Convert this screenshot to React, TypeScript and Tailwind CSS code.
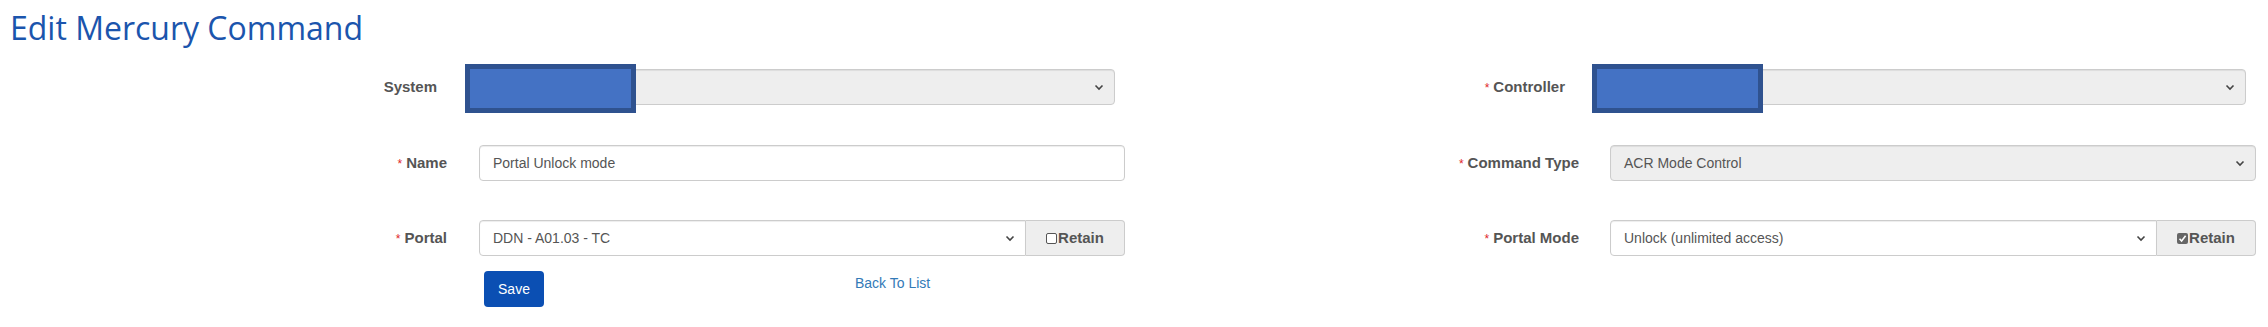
import React from 'react'

const labelCls = "shrink-0 text-right text-[15px] font-bold text-[#555]"

function Req() {
  return <span className="mr-[4px] text-[12px] font-normal text-[#e0262a]">*</span>
}

function Chevron() {
  return (
    <svg width="10" height="7" viewBox="0 0 10 7" className="shrink-0">
      <path d="M1.5 1.5 L5 5 L8.5 1.5" fill="none" stroke="#444" strokeWidth="1.6" />
    </svg>
  )
}

function Redacted() {
  // redaction overlay sitting on top of the select
  return (
    <div className="absolute -left-[4px] -top-[5px] h-[49px] w-[171px] border-[5px] border-[#2f528f] bg-[#4472c4]" />
  )
}

function SelectBox({ value, disabled, className = "" }: { value?: string; disabled?: boolean; className?: string }) {
  return (
    <div
      className={`flex h-[36px] items-center justify-between border border-[#ccc] pl-[13px] pr-[10px] text-[14px] text-[#555] shadow-[inset_0_1px_1px_rgba(0,0,0,0.075)] ${disabled ? "bg-[#eee]" : "bg-white"} ${className}`}
    >
      <span>{value}</span>
      <Chevron />
    </div>
  )
}

function Retain({ checked }: { checked?: boolean }) {
  return (
    <div className="flex h-[36px] w-[99px] shrink-0 items-center justify-center rounded-r-[4px] border border-l-0 border-[#ccc] bg-[#eee] text-[15px] font-bold text-[#555]">
      {checked ? (
        <span className="mr-[1px] flex h-[11px] w-[11px] items-center justify-center rounded-[2px] bg-[#666]">
          <svg width="9" height="9" viewBox="0 0 9 9">
            <path d="M1.5 4.8 L3.6 7 L7.6 1.8" fill="none" stroke="#fff" strokeWidth="1.6" />
          </svg>
        </span>
      ) : (
        <span className="mr-[1px] h-[11px] w-[11px] rounded-[2px] border border-[#555] bg-white" />
      )}
      Retain
    </div>
  )
}

export default function App() {
  return (
    <div className="min-h-[327px] w-full bg-white font-['Liberation_Sans',Arial,sans-serif]">
      <h2 className="pl-[10px] pt-[12px] font-['Open_Sans',sans-serif] text-[32px] leading-none text-[#1b55ad]">
        Edit Mercury Command
      </h2>

      {/* row 1 */}
      <div className="mt-[25px] grid grid-cols-2">
        <div className="flex items-center">
          <div className={`${labelCls} w-[437px]`}>System</div>
          <div className="relative ml-[32px] w-[646px]">
            <SelectBox disabled className="rounded-[4px]" />
            <Redacted />
          </div>
        </div>
        <div className="flex items-center">
          <div className={`${labelCls} w-[431px]`}><Req />Controller</div>
          <div className="relative ml-[31px] w-[650px]">
            <SelectBox disabled className="rounded-[4px]" />
            <Redacted />
          </div>
        </div>
      </div>

      {/* row 2 */}
      <div className="mt-[40px] grid grid-cols-2">
        <div className="flex items-center">
          <div className={`${labelCls} w-[447px]`}><Req />Name</div>
          <div className="ml-[32px] flex h-[36px] w-[646px] items-center rounded-[4px] border border-[#ccc] bg-white pl-[13px] text-[14px] text-[#555] shadow-[inset_0_1px_1px_rgba(0,0,0,0.075)]">
            Portal Unlock mode
          </div>
        </div>
        <div className="flex items-center">
          <div className={`${labelCls} w-[445px]`}><Req />Command Type</div>
          <div className="ml-[31px] w-[646px]">
            <SelectBox disabled value="ACR Mode Control" className="rounded-[4px]" />
          </div>
        </div>
      </div>

      {/* row 3 */}
      <div className="mt-[39px] grid grid-cols-2">
        <div className="flex items-center">
          <div className={`${labelCls} w-[447px]`}><Req />Portal</div>
          <div className="ml-[32px] flex w-[646px]">
            <SelectBox value="DDN - A01.03 - TC" className="flex-1 rounded-l-[4px]" />
            <Retain />
          </div>
        </div>
        <div className="flex items-center">
          <div className={`${labelCls} w-[445px]`}><Req />Portal Mode</div>
          <div className="ml-[31px] flex w-[646px]">
            <SelectBox value="Unlock (unlimited access)" className="flex-1 rounded-l-[4px]" />
            <Retain checked />
          </div>
        </div>
      </div>

      {/* actions */}
      <div className="mt-[15px] flex items-start pl-[484px]">
        <button className="h-[36px] w-[60px] rounded-[4px] bg-[#0b4fb3] text-[14px] text-white">Save</button>
        <a className="ml-[311px] mt-[2px] text-[14px] leading-[20px] text-[#337ab7]">Back To List</a>
      </div>
    </div>
  )
}
